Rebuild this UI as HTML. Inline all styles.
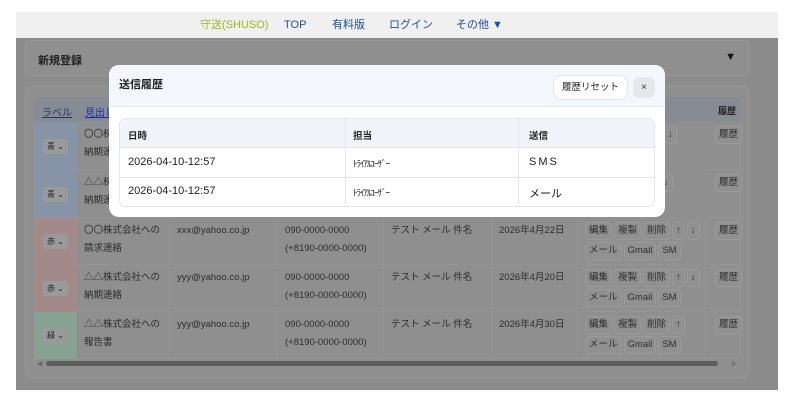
<!DOCTYPE html>
<html><head><meta charset="utf-8"><style>
*{box-sizing:border-box;margin:0;padding:0}
body{width:800px;height:400px;background:#fff;font-family:"Liberation Sans","Noto Sans CJK JP",sans-serif;position:relative;overflow:hidden;font-size:10px;color:#333}
.a{position:absolute}
.nav{left:16px;top:12px;width:762px;height:26px;background:#f0f0f0}
.nav span{position:absolute;top:6px;font-size:11px;line-height:14px;color:#1e4fa0}
.main{left:16px;top:38px;width:762px;height:352px;background:#8c8c8c}
.card{background:#8f8f8f;border:1px solid #979797;border-radius:6px}
.cell{position:absolute;border-right:1px solid #949494;border-bottom:1px solid #949494;color:#2c2c2c;font-size:9.5px;line-height:18px;padding:4px 7px;white-space:nowrap}
.sel{position:absolute;background:#9a9a9a;border-radius:3px;font-size:8px;padding:2px 4px;color:#222}
.b{display:inline-block;border:1px solid #9a9a9a;border-radius:4px;background:#909090;font-size:9.5px;line-height:16px;padding:0 3px;margin:0 2px 2px 0;color:#2e2e2e}
.bc{padding:4px 0 0 7px!important;line-height:16px!important}
.hc{padding:4px 0 0 9px!important;line-height:16px!important;overflow:visible}
.modal{left:109px;top:65px;width:556px;height:152px;background:#fff;border-radius:10px;overflow:hidden}
.mt{position:absolute;font-size:10.5px;color:#222}
</style></head><body>
<div class="a nav">
<span style="left:184px;color:#9dba1a">守送(SHUSO)</span>
<span style="left:268px">TOP</span>
<span style="left:316px">有料版</span>
<span style="left:373px">ログイン</span>
<span style="left:440px">その他 ▼</span>
</div>
<div class="a main">
<div class="a card" style="left:9px;top:2px;width:724px;height:36px"><span class="a" style="left:12px;top:11px;font-size:11px;font-weight:bold;color:#222">新規登録</span><span class="a" style="right:12px;top:10px;font-size:11px;color:#111">▼</span></div>
<div class="a card" style="left:9px;top:48px;width:724px;height:292px"></div>
</div>
<div class="a" style="left:34px;top:97px;width:706px;height:25px;background:#868b94"></div>
<span class="a" style="left:42px;top:104px;font-size:10px;color:#2a2f6a;text-decoration:underline">ラベル</span>
<span class="a" style="left:85px;top:104px;font-size:10px;color:#1a2fa0;text-decoration:underline">見出し</span>
<span class="a" style="left:718px;top:104px;font-size:9px;color:#222;font-weight:bold">履歴</span>

<div class="a" style="left:34px;top:122px;width:43px;height:48px;background:#8794a8"></div>
<div class="a" style="left:34px;top:170px;width:43px;height:48px;background:#8794a8"></div>
<div class="a" style="left:34px;top:218px;width:43px;height:47px;background:#a28a8a"></div>
<div class="a" style="left:34px;top:265px;width:43px;height:47px;background:#a28a8a"></div>
<div class="a" style="left:34px;top:312px;width:43px;height:47px;background:#87a292"></div>
<div class="sel" style="left:43px;top:139px">青 ⌄</div>
<div class="sel" style="left:43px;top:187px">青 ⌄</div>
<div class="sel" style="left:43px;top:234px">赤 ⌄</div>
<div class="sel" style="left:43px;top:281px">赤 ⌄</div>
<div class="sel" style="left:43px;top:328px">緑 ⌄</div>

<div class="cell" style="left:77px;top:122px;width:93px;height:48px">〇〇株式会社への<br>納期連絡</div>
<div class="cell" style="left:77px;top:170px;width:93px;height:48px">△△株式会社への<br>納期連絡</div>
<div class="cell" style="left:77px;top:218px;width:93px;height:47px">〇〇株式会社への<br>請求連絡</div>
<div class="cell" style="left:170px;top:218px;width:108px;height:47px">xxx@yahoo.co.jp</div>
<div class="cell" style="left:278px;top:218px;width:106px;height:47px">090-0000-0000<br>(+8190-0000-0000)</div>
<div class="cell" style="left:384px;top:218px;width:108px;height:47px">テスト メール 件名</div>
<div class="cell" style="left:492px;top:218px;width:86px;height:47px">2026年4月22日</div>
<div class="cell bc" style="left:578px;top:218px;width:128px;height:47px"><span class="b">編集</span><span class="b">複製</span><span class="b">削除</span><span class="b">↑</span><span class="b">↓</span><br><span class="b">メール</span><span class="b">Gmail</span><span class="b">SM</span></div>
<div class="cell hc" style="left:706px;top:218px;width:34px;height:47px"><span class="b">履歴</span></div>

<div class="cell" style="left:77px;top:265px;width:93px;height:47px">△△株式会社への<br>納期連絡</div>
<div class="cell" style="left:170px;top:265px;width:108px;height:47px">yyy@yahoo.co.jp</div>
<div class="cell" style="left:278px;top:265px;width:106px;height:47px">090-0000-0000<br>(+8190-0000-0000)</div>
<div class="cell" style="left:384px;top:265px;width:108px;height:47px">テスト メール 件名</div>
<div class="cell" style="left:492px;top:265px;width:86px;height:47px">2026年4月20日</div>
<div class="cell bc" style="left:578px;top:265px;width:128px;height:47px"><span class="b">編集</span><span class="b">複製</span><span class="b">削除</span><span class="b">↑</span><span class="b">↓</span><br><span class="b">メール</span><span class="b">Gmail</span><span class="b">SM</span></div>
<div class="cell hc" style="left:706px;top:265px;width:34px;height:47px"><span class="b">履歴</span></div>

<div class="cell" style="left:77px;top:312px;width:93px;height:47px">△△株式会社への<br>報告書</div>
<div class="cell" style="left:170px;top:312px;width:108px;height:47px">yyy@yahoo.co.jp</div>
<div class="cell" style="left:278px;top:312px;width:106px;height:47px">090-0000-0000<br>(+8190-0000-0000)</div>
<div class="cell" style="left:384px;top:312px;width:108px;height:47px">テスト メール 件名</div>
<div class="cell" style="left:492px;top:312px;width:86px;height:47px">2026年4月30日</div>
<div class="cell bc" style="left:578px;top:312px;width:128px;height:47px"><span class="b">編集</span><span class="b">複製</span><span class="b">削除</span><span class="b">↑</span><br><span class="b">メール</span><span class="b">Gmail</span><span class="b">SM</span></div>
<div class="cell hc" style="left:706px;top:312px;width:34px;height:47px"><span class="b">履歴</span></div>

<div class="cell" style="left:578px;top:122px;width:128px;height:48px;border:none;padding:4px 0 0 86px;line-height:16px"><span class="b">↓</span></div>
<div class="cell" style="left:578px;top:170px;width:128px;height:48px;border:none;padding:4px 0 0 67px;line-height:16px"><span class="b">↑</span><span class="b">↓</span></div>
<div class="cell hc" style="left:706px;top:122px;width:34px;height:48px"><span class="b">履歴</span></div>
<div class="cell hc" style="left:706px;top:170px;width:34px;height:48px"><span class="b">履歴</span></div>

<div class="a" style="left:46px;top:361px;width:672px;height:5px;border-radius:3px;background:#5e5e5e"></div>
<span class="a" style="left:37px;top:359px;font-size:6px;color:#666">◀</span>
<span class="a" style="left:731px;top:359px;font-size:6px;color:#777">▶</span>

<div class="a modal">
<div class="a" style="left:0;top:0;width:556px;height:42px;background:#f4f7fd;border-bottom:1px solid #e6eaf0"></div>
<span class="mt" style="left:10px;top:11px;font-size:11px;font-weight:bold">送信履歴</span>
<div class="a" style="left:444px;top:10px;width:75px;height:25px;background:#fff;border:1px solid #e3e6ea;border-radius:8px;font-size:9.5px;text-align:center;line-height:23px;color:#222">履歴リセット</div>
<div class="a" style="left:524px;top:12px;width:22px;height:21px;background:#e6e7ea;border-radius:6px;font-size:10px;text-align:center;line-height:21px;color:#333">×</div>
<div class="a" style="left:10px;top:53px;width:536px;height:89px;border:1px solid #e2e6ec;border-radius:7px;overflow:hidden">
<div class="a" style="left:0;top:0;width:536px;height:29px;background:#f1f4f8;border-bottom:1px solid #e2e6ec"></div>
<div class="a" style="left:0;top:58px;width:536px;height:1px;background:#e2e6ec"></div>
<div class="a" style="left:225px;top:0;width:1px;height:89px;background:#e2e6ec"></div>
<div class="a" style="left:398px;top:0;width:1px;height:89px;background:#e2e6ec"></div>
<span class="mt" style="left:8px;top:9px;font-size:9.5px;font-weight:bold">日時</span>
<span class="mt" style="left:233px;top:9px;font-size:9.5px;font-weight:bold">担当</span>
<span class="mt" style="left:409px;top:9px;font-size:9.5px;font-weight:bold">送信</span>
<span class="mt" style="left:8px;top:37px;font-size:11px">2026-04-10-12:57</span>
<span class="mt" style="left:233px;top:38px;font-size:9px;letter-spacing:-1px">ﾄﾗｲｱﾙﾕｰｻﾞｰ</span>
<span class="mt" style="left:409px;top:37px;letter-spacing:2px;font-size:11px">SMS</span>
<span class="mt" style="left:8px;top:66px;font-size:11px">2026-04-10-12:57</span>
<span class="mt" style="left:233px;top:67px;font-size:9px;letter-spacing:-1px">ﾄﾗｲｱﾙﾕｰｻﾞｰ</span>
<span class="mt" style="left:409px;top:66px;font-size:11px">メール</span>
</div>
</div>
</body></html>
